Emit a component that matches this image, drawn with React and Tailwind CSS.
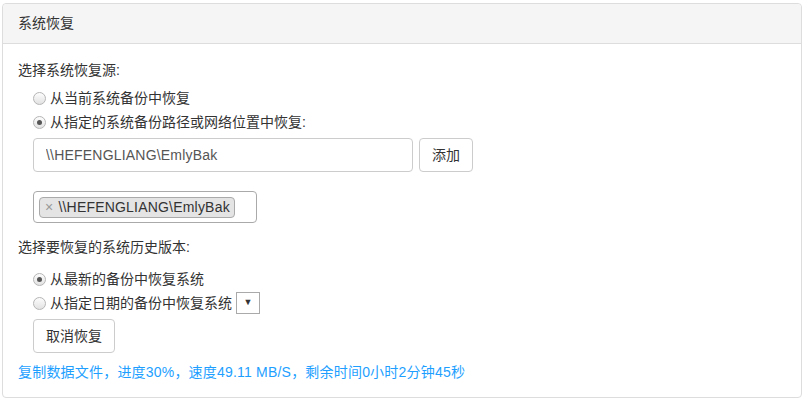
import React, { useState } from 'react';

const font = { fontFamily: '"Liberation Sans", "Noto Sans CJK SC", sans-serif' };

const Radio = ({ checked, label, children, onClick }) => (
  <label onClick={onClick} className="flex items-center h-6 cursor-pointer">
    <span className="w-[13px] h-[13px] rounded-full border border-[#b5b5b5] bg-gradient-to-b from-[#fdfdfd] to-[#e2e2e2] flex items-center justify-center mr-[4px]">
      {checked && <span className="w-[5px] h-[5px] rounded-full bg-[#555]" />}
    </span>
    <span>{label}</span>
    {children}
  </label>
);

const App = () => {
  const [source, setSource] = useState('path');
  const [version, setVersion] = useState('latest');
  const [path, setPath] = useState('\\\\HEFENGLIANG\\EmlyBak');

  return (
    <div className="w-[809px] h-[402px] bg-white pt-[3px] pl-[2px] text-[14px] text-[#333]" style={font}>
      <div className="w-[800px] h-[395px] border border-[#dddddd] rounded-[4px] flex flex-col">
        <div className="h-[40px] bg-[#f5f5f5] border-b border-[#dddddd] rounded-t-[4px] flex items-center pl-[15px]">
          系统恢复
        </div>
        <div className="pl-[15px] pt-[16px]">
          <div className="h-5 leading-5">选择系统恢复源:</div>
          <div className="pl-[15px] mt-[6px]">
            <Radio checked={source === 'current'} label="从当前系统备份中恢复" onClick={() => setSource('current')} />
            <Radio checked={source === 'path'} label="从指定的系统备份路径或网络位置中恢复:" onClick={() => setSource('path')} />
            <div className="flex mt-[4px] gap-[6px]">
              <input
                value={path}
                onChange={(e) => setPath(e.target.value)}
                className="w-[380px] h-[34px] border border-[#cccccc] rounded-[4px] px-[12px] outline-none text-[#555] tracking-[0.2px]"
              />
              <button className="h-[34px] px-[12px] border border-[#cccccc] rounded-[4px] bg-white">添加</button>
            </div>
            <div className="mt-[19px] w-[224px] h-[32px] border border-[#aaaaaa] rounded-[4px] flex items-center pl-[5px]">
              <span className="h-[21px] flex items-center bg-[#e4e4e4] border border-[#aaaaaa] rounded-[4px] pl-[5px] pr-[4px] text-[#333] tracking-[0.2px]">
                <span className="text-[#999] mr-[5px]">×</span>
                \\HEFENGLIANG\EmlyBak
              </span>
            </div>
          </div>
          <div className="h-5 leading-5 mt-[14px]">选择要恢复的系统历史版本:</div>
          <div className="pl-[15px] mt-[10px]">
            <Radio checked={version === 'latest'} label="从最新的备份中恢复系统" onClick={() => setVersion('latest')} />
            <Radio checked={version === 'date'} label="从指定日期的备份中恢复系统" onClick={() => setVersion('date')}>
              <span className="ml-[4px] w-[24px] h-[22px] border border-[#aaaaaa] flex items-center justify-center text-[9px] text-[#333]">▼</span>
            </Radio>
            <button className="mt-[4px] h-[34px] px-[12px] border border-[#cccccc] rounded-[4px] bg-white">取消恢复</button>
          </div>
          <div className="mt-[9px] h-5 leading-5 text-[14px] text-[#1e9fff] tracking-[0.2px]">
            复制数据文件，进度30%，速度49.11 MB/S，剩余时间0小时2分钟45秒
          </div>
        </div>
      </div>
    </div>
  );
};

export default App;
